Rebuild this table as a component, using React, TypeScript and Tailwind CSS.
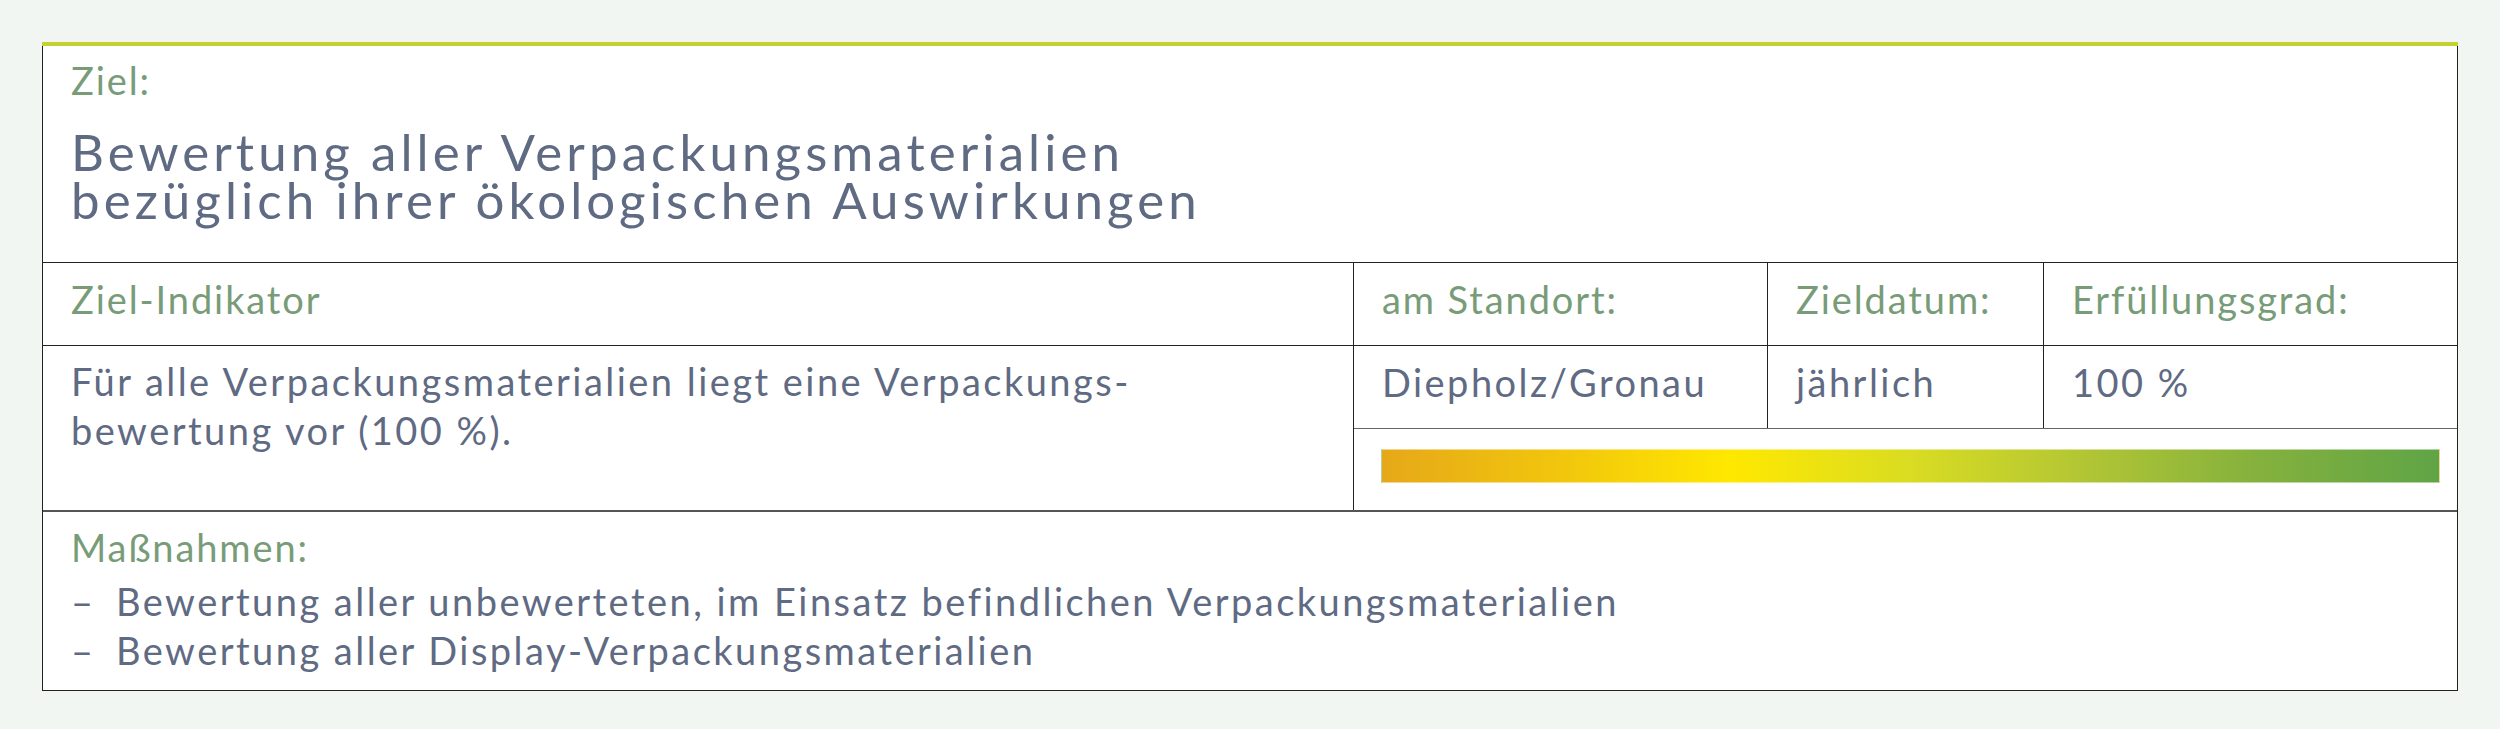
import React from 'react';

const label = 'text-[#789c78] tracking-[0.05em]';
const body = 'text-[#5f6a83] tracking-[0.065em]';

const measures = [
  'Bewertung aller unbewerteten, im Einsatz befindlichen Verpackungsmaterialien',
  'Bewertung aller Display-Verpackungsmaterialien',
];

const App: React.FC = () => {
  return (
    <div className="min-h-screen bg-[#f2f6f3] pt-[42px] pl-[42px] font-['Lato',sans-serif] text-[38px] leading-[49px]">
      <div className="w-[2416px]">
        <div className="h-[4px] bg-[#c5d12e]" />
        <div className="border-x border-b border-[#222] bg-white">
          {/* Ziel */}
          <div className="h-[216px] px-[28px] pt-[10px]">
            <div className={label}>Ziel:</div>
            <h1 className="mt-[23px] text-[51px] leading-[48px] tracking-[0.08em] text-[#5f6a83]">
              <div>Bewertung aller Verpackungsmaterialien</div>
              <div>bezüglich ihrer ökologischen Auswirkungen</div>
            </h1>
          </div>

          {/* header row */}
          <div className="flex border-t border-[#222]">
            <div className={`w-[1311px] border-r border-[#222] px-[28px] pt-[12px] pb-[21px] ${label}`}>
              Ziel-Indikator
            </div>
            <div className={`w-[414px] border-r border-[#222] px-[28px] pt-[12px] pb-[21px] ${label}`}>
              am Standort:
            </div>
            <div className={`w-[276px] border-r border-[#222] px-[28px] pt-[12px] pb-[21px] ${label}`}>
              Zieldatum:
            </div>
            <div className={`flex-1 px-[28px] pt-[12px] pb-[21px] ${label}`}>Erfüllungsgrad:</div>
          </div>

          {/* indicator row */}
          <div className="flex border-t border-[#222]">
            <div className={`w-[1311px] border-r border-[#222] px-[28px] pt-[11px] ${body}`}>
              Für alle Verpackungsmaterialien liegt eine Verpackungs-
              <br />
              bewertung vor (100 %).
            </div>
            <div className="flex flex-1 flex-col">
              <div className={`flex border-b border-[#666] ${body}`}>
                <div className="w-[414px] border-r border-[#222] px-[28px] pt-[12px] pb-[21px]">Diepholz/Gronau</div>
                <div className="w-[276px] border-r border-[#222] px-[28px] pt-[12px] pb-[21px]">jährlich</div>
                <div className="flex-1 px-[28px] pt-[12px] pb-[21px]">100 %</div>
              </div>
              <div className="pl-[27px] pr-[17px] pt-[20px] pb-[27px]">
                <div className="h-[34px] border border-white/50 bg-[linear-gradient(to_right,#e6a819_0%,#f2c80c_18%,#ffe800_33%,#d9dc22_50%,#b3c634_66%,#86b23d_82%,#5fa446_100%)]" />
              </div>
            </div>
          </div>

          {/* Maßnahmen */}
          <div className="border-t-2 border-[#555] px-[28px] pt-[11px] pb-[15px]">
            <div className={label}>Maßnahmen:</div>
            <ul className={`mt-[5px] ${body}`}>
              {measures.map((m) => (
                <li key={m} className="flex">
                  <span className="w-[45px] shrink-0">–</span>
                  <span>{m}</span>
                </li>
              ))}
            </ul>
          </div>
        </div>
      </div>
    </div>
  );
};

export default App;
